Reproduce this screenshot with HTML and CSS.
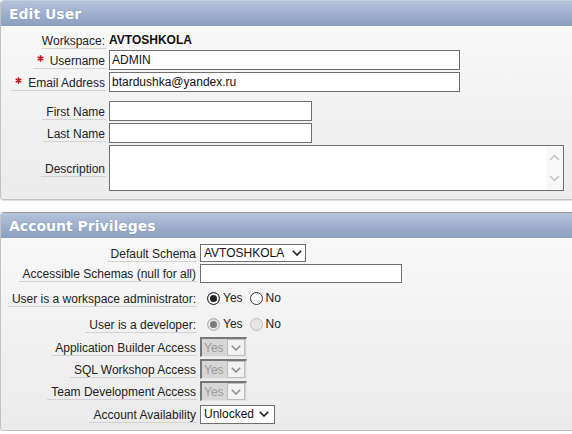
FILE: index.html
```html
<!DOCTYPE html>
<html lang="en">
<head>
    <meta charset="UTF-8">
    <title>Edit User</title>
    <link rel="stylesheet" href="styles.css">
</head>
<body>

    <!-- Edit User -->
    <div class="region">
        <div class="region-header"><h2>Edit User</h2></div>
        <div class="region-body">
            <div class="row row-static">
                <div class="label-cell"><span class="label">Workspace:</span></div>
                <div class="field"><strong>AVTOSHKOLA</strong></div>
            </div>
            <div class="row">
                <div class="label-cell">
                    <label class="label" for="username"><svg class="req" width="7" height="7" viewBox="0 0 7 7"><path d="M3.5 0.3V6.7M0.7 1.9L6.3 5.1M0.7 5.1L6.3 1.9"/></svg>Username</label>
                </div>
                <div class="field"><input type="text" id="username" class="text-input w-long" value="ADMIN"></div>
            </div>
            <div class="row">
                <div class="label-cell">
                    <label class="label" for="email"><svg class="req" width="7" height="7" viewBox="0 0 7 7"><path d="M3.5 0.3V6.7M0.7 1.9L6.3 5.1M0.7 5.1L6.3 1.9"/></svg>Email Address</label>
                </div>
                <div class="field"><input type="text" id="email" class="text-input w-long" value="btardushka@yandex.ru"></div>
            </div>

            <div class="group">
                <div class="row">
                    <div class="label-cell"><label class="label" for="first-name">First Name</label></div>
                    <div class="field"><input type="text" id="first-name" class="text-input w-name"></div>
                </div>
                <div class="row">
                    <div class="label-cell"><label class="label" for="last-name">Last Name</label></div>
                    <div class="field"><input type="text" id="last-name" class="text-input w-name"></div>
                </div>
                <div class="row">
                    <div class="label-cell"><label class="label" for="description">Description</label></div>
                    <div class="field">
                        <div class="textarea-wrap">
                            <textarea id="description"></textarea>
                            <div class="scroll-strip">
                                <svg width="11" height="7" viewBox="0 0 11 7"><path d="M1 6L5.5 1.5L10 6"/></svg>
                                <svg width="11" height="7" viewBox="0 0 11 7"><path d="M1 1L5.5 5.5L10 1"/></svg>
                            </div>
                        </div>
                    </div>
                </div>
            </div>
        </div>
    </div>

    <!-- Account Privileges -->
    <div class="region region-second">
        <div class="region-header"><h2>Account Privileges</h2></div>
        <div class="region-body privileges">
            <div class="row">
                <div class="label-cell"><label class="label" for="schema">Default Schema</label></div>
                <div class="field">
                    <span class="select-wrap">
                        <select id="schema" class="select w-schema"><option>AVTOSHKOLA</option></select>
                        <svg class="chevron" width="10" height="6" viewBox="0 0 10 6"><path d="M0.8 0.8L5 5L9.2 0.8"/></svg>
                    </span>
                </div>
            </div>
            <div class="row">
                <div class="label-cell"><label class="label" for="schemas">Accessible Schemas (null for all)</label></div>
                <div class="field"><input type="text" id="schemas" class="text-input w-schemas"></div>
            </div>
            <div class="row row-admin">
                <div class="label-cell"><span class="label">User is a workspace administrator:</span></div>
                <div class="field radios">
                    <label><input type="radio" name="admin" checked> Yes</label>
                    <label><input type="radio" name="admin"> No</label>
                </div>
            </div>
            <div class="row row-dev">
                <div class="label-cell"><span class="label">User is a developer:</span></div>
                <div class="field radios">
                    <label><input type="radio" name="developer" checked disabled> Yes</label>
                    <label><input type="radio" name="developer" disabled> No</label>
                </div>
            </div>
            <div class="row">
                <div class="label-cell"><label class="label">Application Builder Access</label></div>
                <div class="field">
                    <span class="select-off"><span class="select-off-text">Yes</span><span class="select-off-btn"><svg width="10" height="6" viewBox="0 0 10 6"><path d="M0.8 0.8L5 5L9.2 0.8"/></svg></span></span>
                </div>
            </div>
            <div class="row">
                <div class="label-cell"><label class="label">SQL Workshop Access</label></div>
                <div class="field">
                    <span class="select-off"><span class="select-off-text">Yes</span><span class="select-off-btn"><svg width="10" height="6" viewBox="0 0 10 6"><path d="M0.8 0.8L5 5L9.2 0.8"/></svg></span></span>
                </div>
            </div>
            <div class="row">
                <div class="label-cell"><label class="label">Team Development Access</label></div>
                <div class="field">
                    <span class="select-off"><span class="select-off-text">Yes</span><span class="select-off-btn"><svg width="10" height="6" viewBox="0 0 10 6"><path d="M0.8 0.8L5 5L9.2 0.8"/></svg></span></span>
                </div>
            </div>
            <div class="row row-last">
                <div class="label-cell"><label class="label" for="availability">Account Availability</label></div>
                <div class="field">
                    <span class="select-wrap">
                        <select id="availability" class="select w-lock"><option>Unlocked</option></select>
                        <svg class="chevron" width="10" height="6" viewBox="0 0 10 6"><path d="M0.8 0.8L5 5L9.2 0.8"/></svg>
                    </span>
                </div>
            </div>
        </div>
    </div>

</body>
</html>
```

FILE: styles.css
```css
/* Old APEX look: blue region headers, grey bodies */
body {
    font-family: "Liberation Sans", Arial, sans-serif;
    font-size: 12px;
    color: #222;
    background: #fff;
    margin: 0;
    overflow: hidden;
}

.region {
    border: 1px solid #c2c2c2;
    border-top-color: #c4cfe2;
    border-right: none;
    border-radius: 4px 0 0 4px;
    box-shadow: 0 1px 1px rgba(0, 0, 0, 0.12);
    overflow: hidden;
}

.region-second {
    margin-top: 12px;
    border-top-color: #9d9d9d;
}

.region-header {
    height: 25px;
    background: linear-gradient(#b5c3dc, #8a9ebf);
}

.region-header h2 {
    margin: 0;
    padding: 2px 8px 0;
    font-family: "DejaVu Sans", sans-serif;
    font-size: 14px;
    font-weight: bold;
    line-height: 23px;
    color: #fff;
    text-shadow: 0 0 1px rgba(70, 90, 130, 0.5);
}

.region-body {
    background: linear-gradient(#f8f8f8, #ebebeb);
    padding: 6px 0 6px;
}

.privileges {
    padding: 6px 0 5px;
}

/* label / field rows */
.row {
    display: flex;
    align-items: center;
    margin-bottom: 2px;
}

.row-static {
    height: 16px;
}

.group {
    margin-top: 9px;
}

.label-cell {
    width: 105px;
    flex-shrink: 0;
    text-align: right;
}

.privileges .label-cell {
    width: 196px;
}

.label {
    display: inline-block;
    padding: 2px 1px 0 4px;
    line-height: 14px;
    border-bottom: 1px solid #d2d2d2;
    color: #222;
}

.row-static .label {
    padding-left: 1px;
}

.req {
    margin: 0 6px 0 0;
    vertical-align: 3px;
}

.req path {
    stroke: #c8141e;
    stroke-width: 1.6;
    fill: none;
}

.field {
    margin-left: 3px;
    display: flex;
    align-items: center;
}

.field strong {
    color: #111;
}

/* text inputs */
.text-input {
    box-sizing: border-box;
    height: 20px;
    border: 1px solid #6f6f6f;
    background: #fff;
    padding: 0 2px;
    font-family: "Liberation Sans", Arial, sans-serif;
    font-size: 12px;
    color: #111;
    margin: 0;
    outline: none;
}

.w-long { width: 351px; }
.w-name { width: 203px; }
.w-schemas { width: 202px; height: 19px; }

.textarea-wrap {
    display: flex;
    box-sizing: border-box;
    width: 455px;
    height: 46px;
    border: 1px solid #6f6f6f;
    background: #fff;
}

.textarea-wrap textarea {
    flex: 1;
    border: none;
    resize: none;
    outline: none;
    font-family: "Liberation Sans", Arial, sans-serif;
    font-size: 12px;
    padding: 2px;
}

.scroll-strip {
    width: 17px;
    background: #f8f8f8;
    display: flex;
    flex-direction: column;
    align-items: center;
    justify-content: space-between;
    padding: 8px 0 8px;
    box-sizing: border-box;
}

.scroll-strip path {
    stroke: #c3c3c3;
    stroke-width: 1.5;
    fill: none;
}

/* selects */
.select-wrap {
    position: relative;
    display: inline-block;
    line-height: 0;
}

.select {
    appearance: none;
    -webkit-appearance: none;
    box-sizing: border-box;
    height: 18px;
    border: 1px solid #6f6f6f;
    border-radius: 0;
    background: #fff;
    padding: 0 0 0 3px;
    margin: 0;
    font-family: "Liberation Sans", Arial, sans-serif;
    font-size: 12px;
    color: #111;
    outline: none;
}

.w-schema { width: 106px; }
.w-lock { width: 75px; height: 19px; }

.chevron {
    position: absolute;
    top: 6px;
    right: 4px;
    pointer-events: none;
}

.w-lock + .chevron {
    right: 6px;
}

.chevron path {
    stroke: #1a1a1a;
    stroke-width: 1.6;
    fill: none;
}

/* disabled selects */
.select-off {
    display: inline-flex;
    align-items: center;
    box-sizing: border-box;
    width: 47px;
    height: 20px;
    background: #d6d6d6;
    border-style: solid;
    border-width: 2px 1px 1px 2px;
    border-color: #777 #e6e6e6 #e6e6e6 #777;
}

.select-off-text {
    flex: 1;
    padding-left: 2px;
    color: #9a9a9a;
}

.select-off-btn {
    box-sizing: border-box;
    width: 18px;
    height: 17px;
    margin-right: 1px;
    background: #f2f2f2;
    border: 1px solid #bdbdbd;
    display: flex;
    align-items: center;
    justify-content: center;
}

.select-off-btn path {
    stroke: #8a8a8a;
    stroke-width: 1.5;
    fill: none;
}

/* radio groups */
.row-admin { height: 26px; }
.row-dev { height: 22px; }
.row-last { height: 22px; margin-bottom: 0; }

.radios {
    padding-left: 7px;
}

.radios label {
    display: flex;
    align-items: center;
    margin-right: 7px;
}

.radios input {
    appearance: none;
    -webkit-appearance: none;
    width: 13px;
    height: 13px;
    margin: 0 3px 0 0;
    border: 1px solid #333;
    border-radius: 50%;
    background: #fff;
}

.radios input:checked {
    background: #222;
    box-shadow: inset 0 0 0 2px #fff;
}

.radios input:disabled {
    border-color: #bcbcbc;
    background: #e6e6e6;
}

.radios input:disabled:checked {
    background: #7d7d7d;
    box-shadow: inset 0 0 0 2px #e6e6e6;
}
```
